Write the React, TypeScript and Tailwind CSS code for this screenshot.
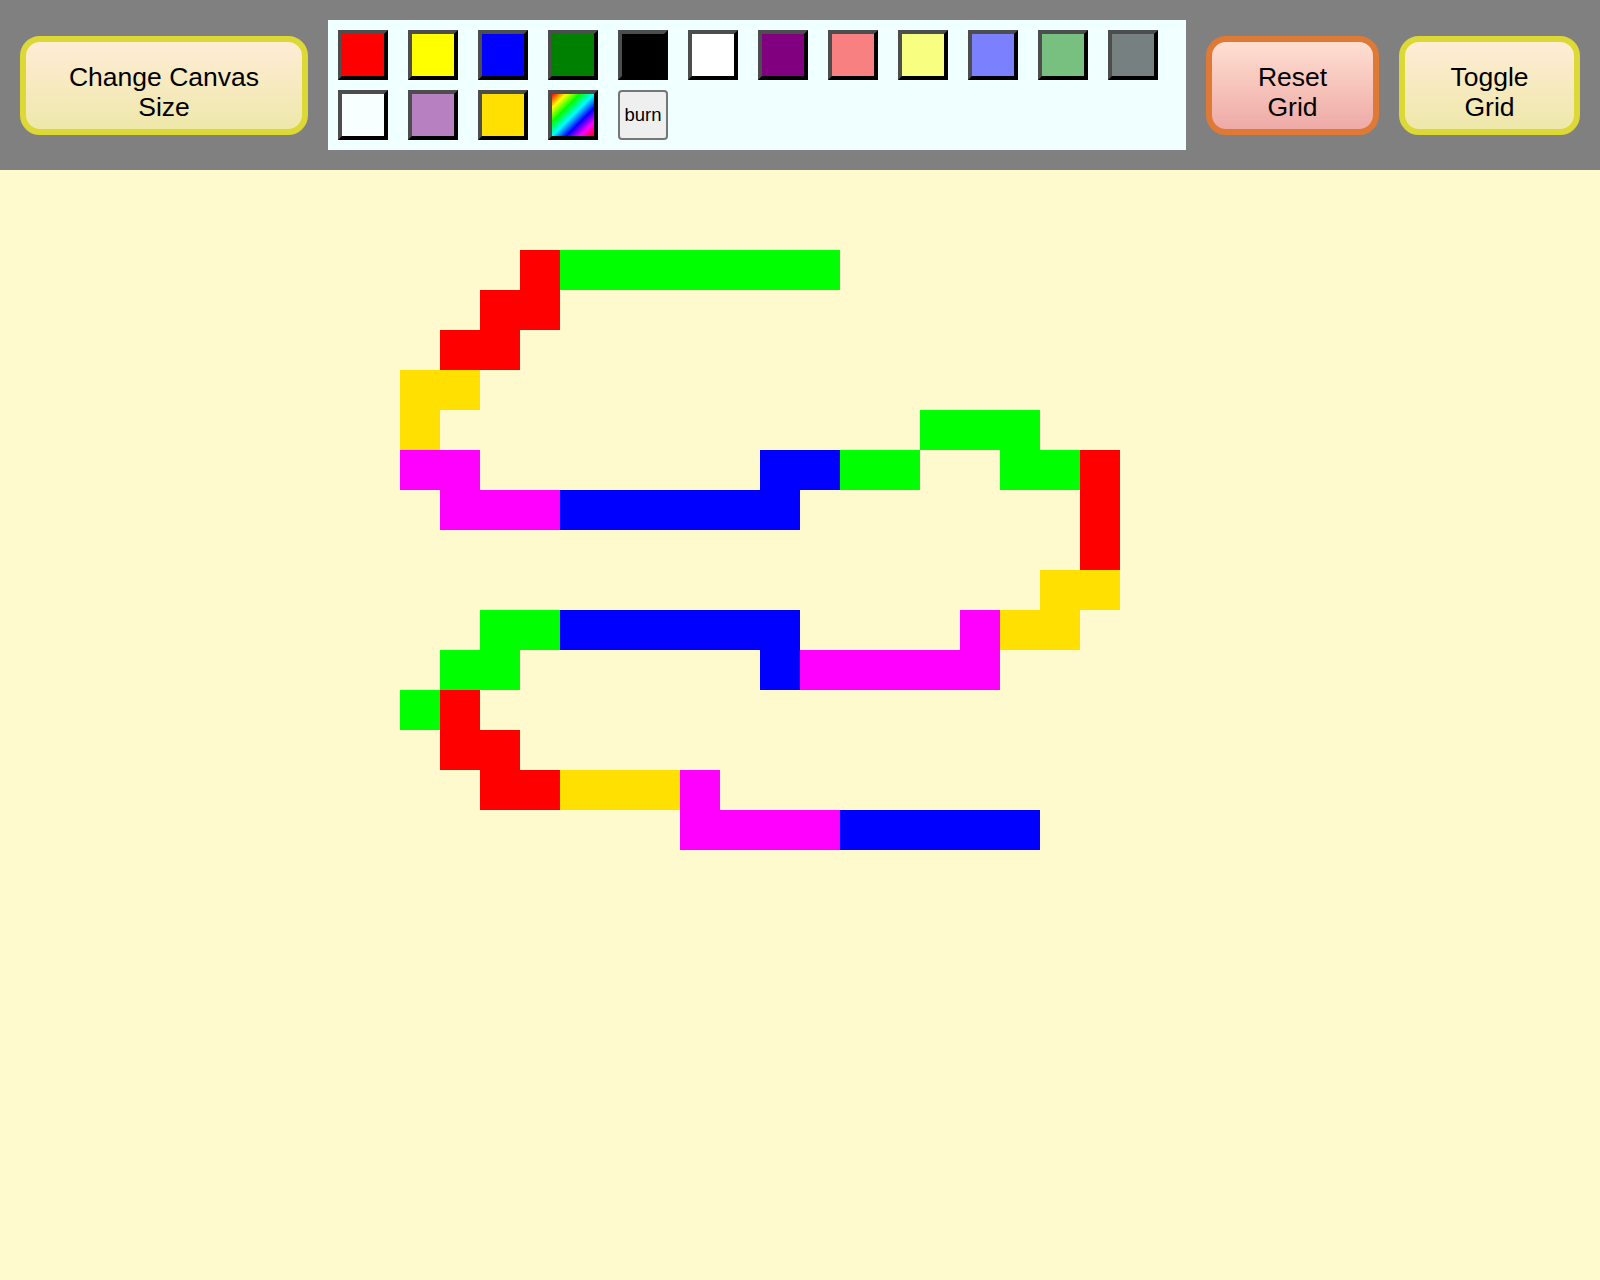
import React from "react";

const swatches = [
  "bg-[#ff0000]",
  "bg-[#ffff00]",
  "bg-[#0000ff]",
  "bg-[#008000]",
  "bg-[#000000]",
  "bg-[#ffffff]",
  "bg-[#800080]",
  "bg-[#f88080]",
  "bg-[#f8ff80]",
  "bg-[#7b80ff]",
  "bg-[#78c080]",
  "bg-[#778080]",
  "bg-[#f8ffff]",
  "bg-[#b780c0]",
  "bg-[#ffe000]",
  "bg-[linear-gradient(135deg,#ff0000,#ffff00,#00ff00,#00ffff,#0000ff,#ff00ff,#ff0000)]",
];

const paint: Record<string, string> = {
  R: "bg-[#ff0000]",
  G: "bg-[#00ff00]",
  B: "bg-[#0000ff]",
  M: "bg-[#ff00ff]",
  Y: "bg-[#ffe000]",
};

// [row, from col, to col, colour]
const strokes: [number, number, number, string][] = [
  [2, 13, 13, "R"],
  [2, 14, 20, "G"],
  [3, 12, 13, "R"],
  [4, 11, 12, "R"],
  [5, 10, 11, "Y"],
  [6, 10, 10, "Y"],
  [6, 23, 25, "G"],
  [7, 10, 11, "M"],
  [7, 19, 20, "B"],
  [7, 21, 22, "G"],
  [7, 25, 26, "G"],
  [7, 27, 27, "R"],
  [8, 11, 13, "M"],
  [8, 14, 19, "B"],
  [8, 27, 27, "R"],
  [9, 27, 27, "R"],
  [10, 26, 27, "Y"],
  [11, 12, 13, "G"],
  [11, 14, 19, "B"],
  [11, 24, 24, "M"],
  [11, 25, 26, "Y"],
  [12, 11, 12, "G"],
  [12, 19, 19, "B"],
  [12, 20, 24, "M"],
  [13, 10, 10, "G"],
  [13, 11, 11, "R"],
  [14, 11, 12, "R"],
  [15, 12, 13, "R"],
  [15, 14, 16, "Y"],
  [15, 17, 17, "M"],
  [16, 17, 20, "M"],
  [16, 21, 25, "B"],
];

const COLS = 40;
const ROWS = 28;

const cells: string[] = Array(COLS * ROWS).fill("");
strokes.forEach(([r, a, b, c]) => {
  for (let i = a; i <= b; i++) cells[r * COLS + i] = c;
});

const App = () => {
  return (
    <div className="min-h-screen w-full bg-[#fffacd] font-['Liberation_Sans',Arial,sans-serif] overflow-hidden">
      <header className="h-[170px] flex items-center justify-between pl-5 pr-[20px] bg-[#808080]">
        <button className="w-[288px] h-[99px] flex flex-col items-center justify-start pt-[20px] border-[6px] border-[#dcd835] rounded-[20px] bg-[linear-gradient(#ffecd6,#eee8aa)] text-[26.5px] leading-[30px] text-black">
          <span>Change Canvas</span>
          <span>Size</span>
        </button>

        <div className="w-[858px] h-[130px] bg-[#f0ffff] p-[10px] flex flex-wrap content-start gap-x-5 gap-y-[10px]">
          {swatches.map((s, i) => (
            <div
              key={i}
              className={`w-[50px] h-[50px] border-4 border-t-[#4d4d4d] border-l-[#4d4d4d] border-r-black border-b-black ${s}`}
            />
          ))}
          <button className="w-[50px] h-[50px] flex items-center justify-center border-2 border-[#767676] rounded-[4px] bg-[#efefef] text-[18.5px] text-black">
            burn
          </button>
        </div>

        <button className="w-[173px] h-[99px] flex flex-col items-center justify-start pt-[20px] border-[6px] border-[#de7a35] rounded-[20px] bg-[linear-gradient(#ffdfd2,#eeaaa6)] text-[26.5px] leading-[30px] text-black">
          <span>Reset</span>
          <span>Grid</span>
        </button>

        <button className="w-[181px] h-[99px] flex flex-col items-center justify-start pt-[20px] border-[6px] border-[#dcd835] rounded-[20px] bg-[linear-gradient(#ffecd6,#eee8aa)] text-[26.5px] leading-[30px] text-black">
          <span>Toggle</span>
          <span>Grid</span>
        </button>
      </header>

      <div className="grid grid-cols-[repeat(40,40px)] auto-rows-[40px]">
        {cells.map((c, i) => (
          <div key={i} className={c ? paint[c] : ""} />
        ))}
      </div>
    </div>
  );
};

export default App;
